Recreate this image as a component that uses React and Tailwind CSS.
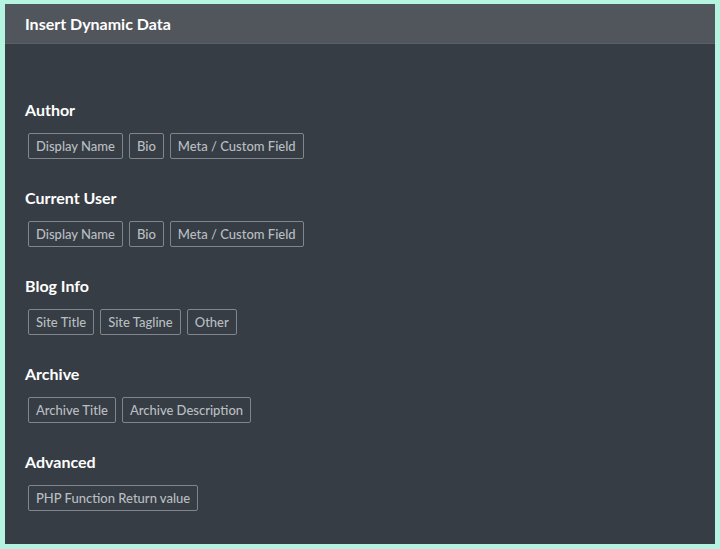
export default function App() {
  const sections = [
    { title: "Author", items: ["Display Name", "Bio", "Meta / Custom Field"] },
    { title: "Current User", items: ["Display Name", "Bio", "Meta / Custom Field"] },
    { title: "Blog Info", items: ["Site Title", "Site Tagline", "Other"] },
    { title: "Archive", items: ["Archive Title", "Archive Description"] },
    { title: "Advanced", items: ["PHP Function Return value"] },
  ];

  return (
    <div
      className="w-[720px] h-[549px] bg-[#b4f4e0] pt-[4px] px-[5px] pb-[5px]"
      style={{ fontFamily: "Lato, 'Noto Sans', sans-serif" }}
    >
      <div className="w-full h-full bg-[#363d44] flex flex-col">
        {/* Header */}
        <div className="h-[40px] bg-[#50565c] border-b border-[#5a6066] px-[20px] flex items-center">
          <span className="text-white text-[16px] font-bold">Insert Dynamic Data</span>
        </div>

        {/* Sections */}
        <div className="px-[20px] pt-[56px] flex flex-col gap-[29px]">
          {sections.map((section) => (
            <div key={section.title} className="flex flex-col gap-[13px]">
              <h3 className="text-white text-[16px] font-bold leading-[20px]">{section.title}</h3>
              <div className="flex gap-[6px] ml-[3px]">
                {section.items.map((item) => (
                  <button
                    key={item}
                    type="button"
                    className="h-[26px] px-[7px] border border-[#80868c] rounded-[2px] text-[#b9bdc1] text-[13px] font-medium leading-none"
                  >
                    {item}
                  </button>
                ))}
              </div>
            </div>
          ))}
        </div>
      </div>
    </div>
  );
}
